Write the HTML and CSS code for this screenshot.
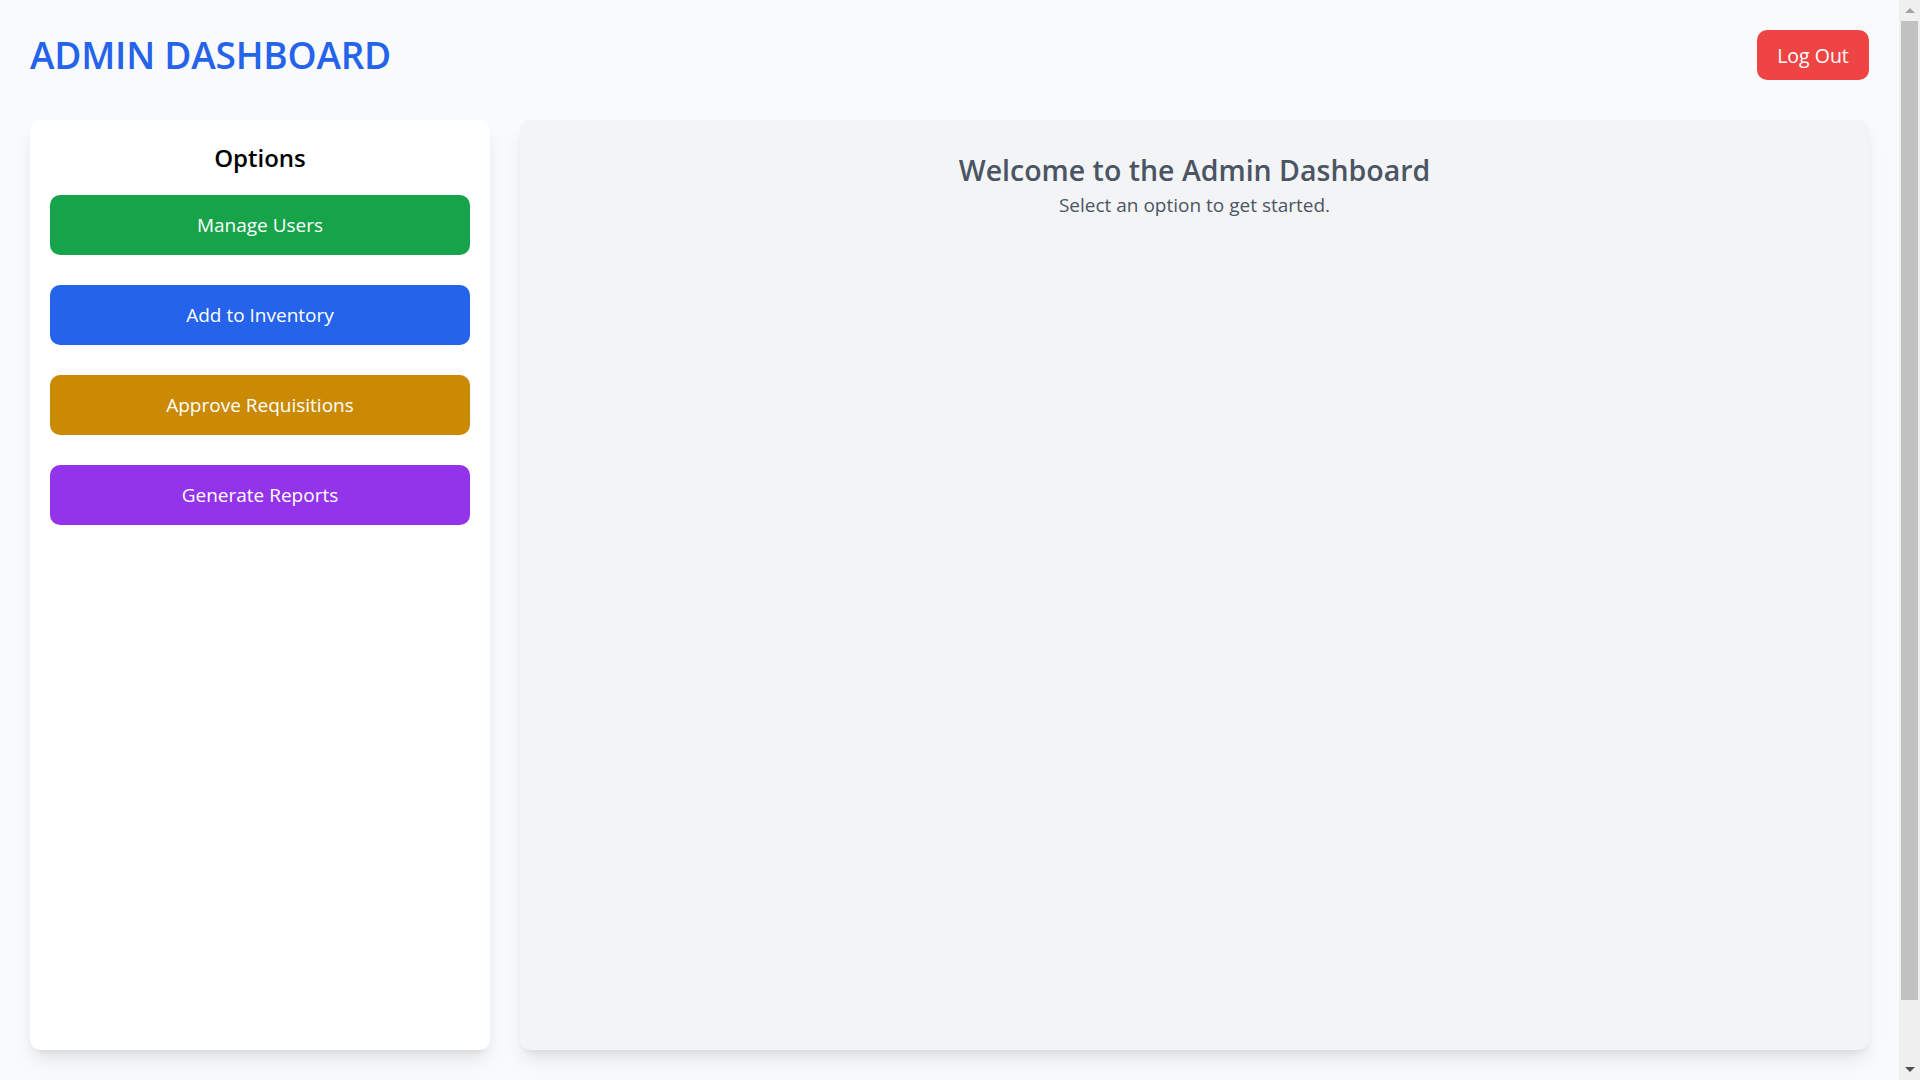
FILE: index.html
```html
<!DOCTYPE html>
<html lang="en">
<head>
<meta charset="utf-8">
<title>Admin Dashboard</title>
<link rel="stylesheet" href="styles.css">
</head>
<body>
<div class="page">
  <header class="topbar">
    <h1 class="title">ADMIN DASHBOARD</h1>
    <button class="logout">Log Out</button>
  </header>
  <div class="layout">
    <aside class="sidebar">
      <h2 class="sidebar-title">Options</h2>
      <div class="options">
        <button class="opt opt-green">Manage Users</button>
        <button class="opt opt-blue">Add to Inventory</button>
        <button class="opt opt-amber">Approve Requisitions</button>
        <button class="opt opt-purple">Generate Reports</button>
      </div>
    </aside>
    <main class="main">
      <h2 class="welcome">Welcome to the Admin Dashboard</h2>
      <p class="subtitle">Select an option to get started.</p>
    </main>
  </div>
</div>
<div class="scrollbar" aria-hidden="true">
  <span class="sb-arrow sb-up"></span>
  <span class="sb-thumb"></span>
  <span class="sb-arrow sb-down"></span>
</div>
</body>
</html>
```
FILE: styles.css
```css
html, body {
  margin: 0;
  padding: 0;
}
body {
  background: #f9fafb;
  font-family: "Open Sans", "Noto Sans", sans-serif;
  color: #111827;
  margin-right: 21px;
}
.page {
  padding: 30px 30px 104px;
}
.topbar {
  display: flex;
  justify-content: space-between;
  align-items: center;
  height: 50px;
  margin-bottom: 40px;
}
.title {
  margin: 0;
  font-size: 37px;
  font-weight: 600;
  color: #2563eb;
  line-height: 50px;
  letter-spacing: -0.2px;
}
.logout {
  background: #ef4444;
  color: #fff;
  border: none;
  border-radius: 10px;
  width: 112px;
  height: 50px;
  font-family: inherit;
  font-size: 19.5px;
  cursor: pointer;
}
.layout {
  display: flex;
  gap: 30px;
  height: 930px;
}
.sidebar {
  width: 460px;
  flex: none;
  box-sizing: border-box;
  background: #fff;
  border-radius: 10px;
  padding: 20px;
  box-shadow: 0 12px 19px -4px rgba(0,0,0,0.1), 0 5px 8px -5px rgba(0,0,0,0.1);
}
.sidebar-title {
  margin: 0 0 20px;
  text-align: center;
  font-size: 24px;
  font-weight: 600;
  line-height: 35px;
  color: #000;
}
.options {
  display: flex;
  flex-direction: column;
  gap: 30px;
}
.opt {
  height: 60px;
  border: none;
  border-radius: 10px;
  color: #fff;
  font-family: inherit;
  font-size: 19px;
  cursor: pointer;
}
.opt-green { background: #16a34a; }
.opt-blue { background: #2563eb; }
.opt-amber { background: #ca8a04; }
.opt-purple { background: #9333ea; }
.main {
  flex: 1;
  background: #f3f4f6;
  border-radius: 10px;
  padding: 30px;
  text-align: center;
  box-shadow: 0 12px 19px -4px rgba(0,0,0,0.1), 0 5px 8px -5px rgba(0,0,0,0.1);
}
.welcome {
  margin: 0;
  font-size: 28.5px;
  font-weight: 600;
  line-height: 40px;
  color: #4b5563;
}
.subtitle {
  margin: 0;
  font-size: 19px;
  line-height: 30px;
  color: #4b5563;
}
.scrollbar {
  position: fixed;
  top: 0;
  right: 0;
  width: 21px;
  height: 100vh;
  background: #f0f0f0;
  display: flex;
  flex-direction: column;
  align-items: center;
}
.sb-arrow {
  width: 0;
  height: 0;
  border-left: 5px solid transparent;
  border-right: 5px solid transparent;
}
.sb-up {
  margin-top: 8px;
  border-bottom: 5px solid #a3a3a3;
}
.sb-thumb {
  margin-top: 8px;
  width: 17px;
  height: 979px;
  background: #c1c1c1;
}
.sb-down {
  margin-top: auto;
  margin-bottom: 8px;
  border-top: 5px solid #505050;
}
```
